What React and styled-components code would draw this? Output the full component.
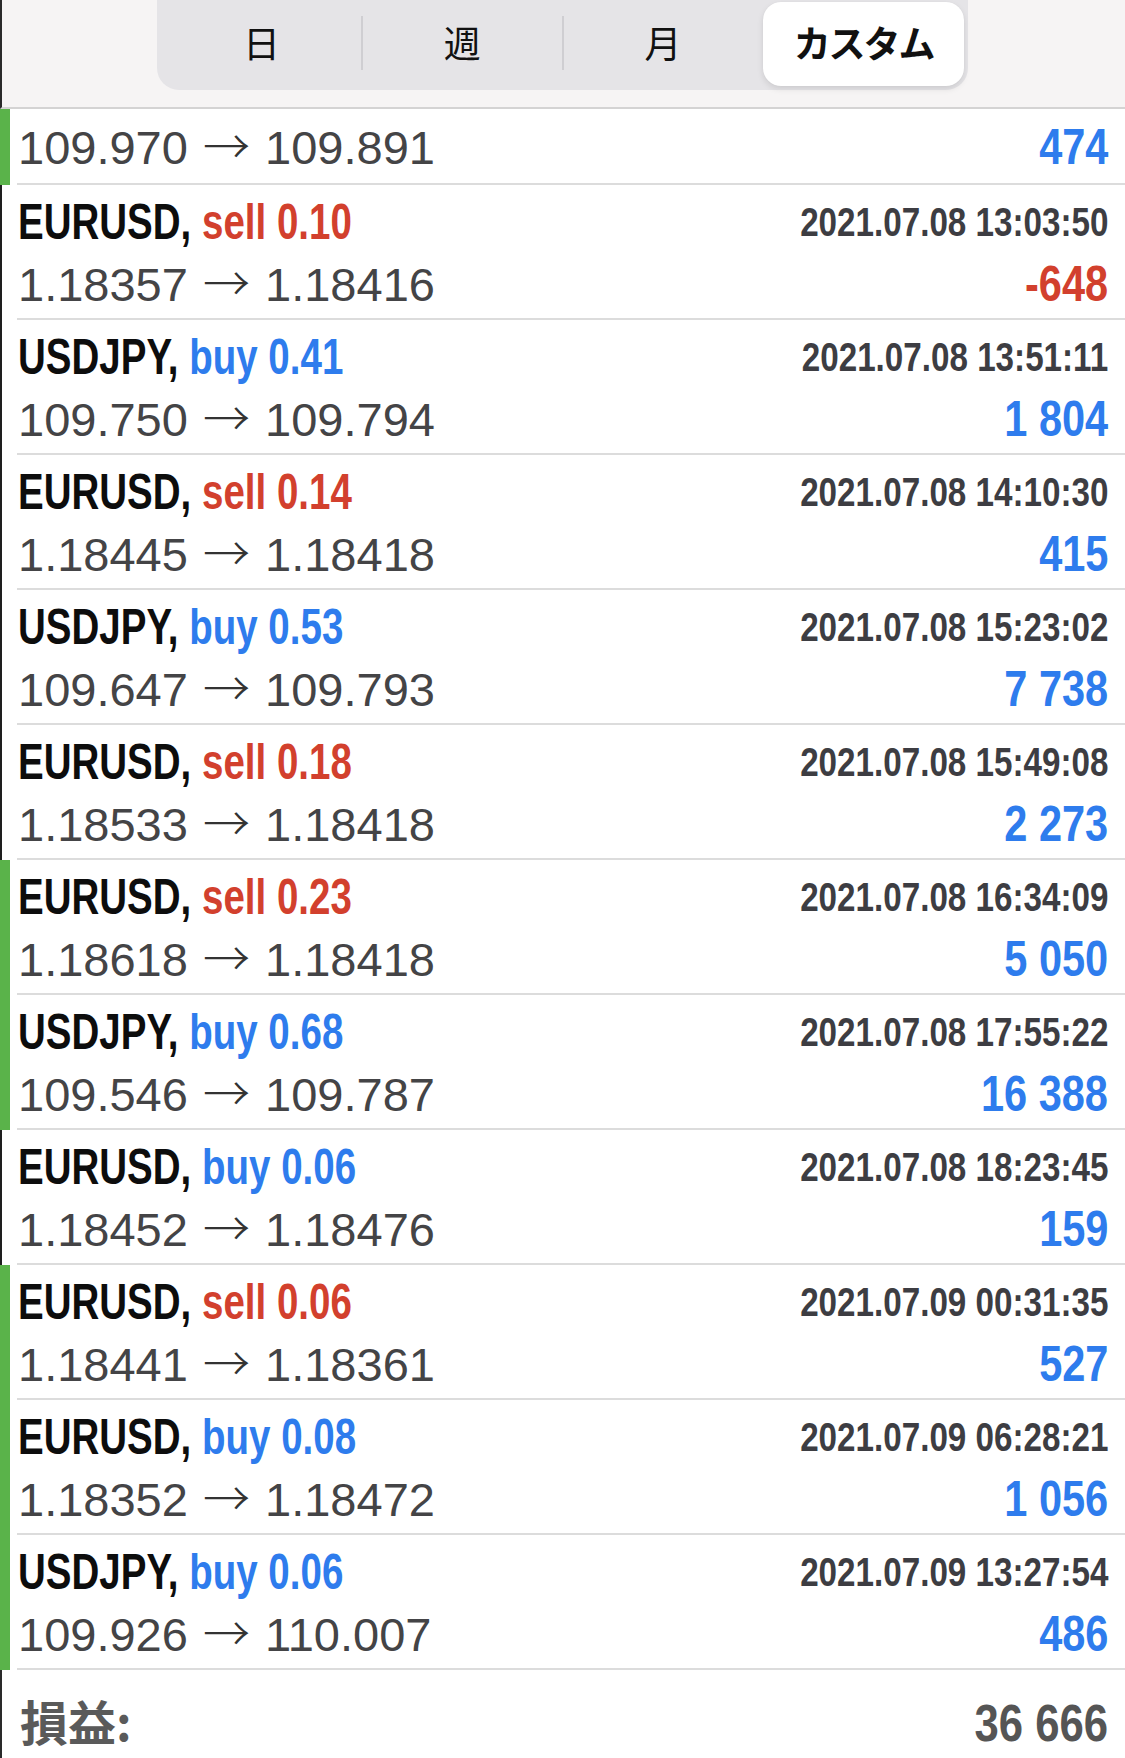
import React from "react";
import styled, { createGlobalStyle } from "styled-components";

const GlobalStyle = createGlobalStyle`
  body {
    margin: 0;
    background: #ffffff;
  }
`;

// no condensed face is installed, so the bold text is squeezed with scaleX
const BOLD = `"Liberation Sans", Arial, sans-serif`;
const CJK = `"Noto Sans CJK JP", "Noto Sans", sans-serif`;

const BLUE = "#2e7ced";
const RED = "#d2402d";
const GREEN = "#5ab34a";

let Page = styled.div`
  width: 1125px;
  min-height: 1758px;
  overflow: hidden;
  background: #ffffff;
`;

let Header = styled.header`
  height: 107px;
  background: #f6f4f4;
  border-bottom: 2px solid #d4d3d3;
  border-left: 2px solid #2a2a2a;
  display: flex;
  justify-content: center;
  align-items: flex-start;
`;

let Segmented = styled.div`
  box-sizing: border-box;
  width: 811px;
  height: 110px;
  margin-top: -20px;
  margin-left: -2px;
  padding: 22px 4px 4px;
  border-radius: 22px;
  background: #e5e4e7;
  display: grid;
  grid-template-columns: repeat(4, 1fr);
`;

let Segment = styled.div`
  position: relative;
  display: flex;
  justify-content: center;
  align-items: center;
  padding-bottom: 4px;
  font-family: ${CJK};
  font-size: 37px;
  font-weight: ${(p) => (p.$active ? 700 : 400)};
  letter-spacing: ${(p) => (p.$active ? "-2px" : "0")};
  color: #111111;
  border-radius: 18px;
  background: ${(p) => (p.$active ? "#ffffff" : "transparent")};
  box-shadow: ${(p) =>
    p.$active ? "0 3px 6px rgba(0,0,0,0.10), 0 0 1px rgba(0,0,0,0.08)" : "none"};

  &::before {
    content: "";
    display: ${(p) => (p.$divider ? "block" : "none")};
    position: absolute;
    left: -1px;
    top: 14px;
    height: 54px;
    width: 2px;
    background: #cfced2;
  }
`;

let Row = styled.div`
  display: flex;
  height: ${(p) => (p.$partial ? "76px" : "135px")};
`;

let Bar = styled.div`
  flex: 0 0 10px;
  background: ${(p) =>
    p.$win ? GREEN : "linear-gradient(to right, #1e1e1e 2px, transparent 2px)"};
`;

let Body = styled.div`
  flex: 1;
  margin-left: 7px;
  padding: ${(p) => (p.$partial ? "10px" : "7px")} 17px 0 1px;
  border-bottom: 2px solid #dcdcdc;
  display: flex;
  flex-direction: column;
  gap: 4px;
`;

let TopLine = styled.div`
  display: flex;
  justify-content: space-between;
  align-items: flex-start;
  height: 60px;
`;

let BottomLine = styled.div`
  display: flex;
  justify-content: space-between;
  align-items: baseline;
`;

let Squeezed = styled.span`
  display: inline-block;
  font-family: ${BOLD};
  font-weight: 700;
  white-space: nowrap;
  transform: scaleX(${(p) => p.$sx || 0.82});
  transform-origin: ${(p) => (p.$right ? "right" : "left")} center;
`;

let Symbol = styled(Squeezed)`
  font-size: 50px;
  line-height: 60px;
  color: #0d0d0d;
`;

let Side = styled.span`
  color: ${(p) => (p.$type === "buy" ? BLUE : RED)};
`;

let Time = styled(Squeezed)`
  font-size: 40px;
  line-height: 60px;
  color: #3d3d42;
`;

let Prices = styled.span`
  font-family: "Liberation Sans", Arial, sans-serif;
  font-size: 47px;
  line-height: 56px;
  color: #444446;
  white-space: nowrap;
`;

let Arrow = styled.span`
  font-family: ${CJK};
  font-weight: 300;
  line-height: 0;
  margin: 0 2px;
  color: #333333;
`;

let Profit = styled(Squeezed)`
  font-size: 50px;
  line-height: 56px;
  color: ${(p) => (p.$loss ? RED : BLUE)};
`;

let Footer = styled.footer`
  height: 68px;
  padding: 20px 17px 0 18px;
  border-left: 2px solid #2a2a2a;
  display: flex;
  justify-content: space-between;
  align-items: baseline;
`;

let TotalLabel = styled.span`
  font-family: ${CJK};
  font-weight: 700;
  font-size: 48px;
  line-height: 60px;
  color: #5a5a5a;
`;

let TotalValue = styled(Squeezed)`
  font-size: 52px;
  line-height: 60px;
  color: #555555;
`;

const tabs = ["日", "週", "月", "カスタム"];

const deals = [
  { sym: "EURUSD", type: "sell", lot: "0.10", time: "2021.07.08 13:03:50", open: "1.18357", close: "1.18416", profit: "-648", win: false },
  { sym: "USDJPY", type: "buy", lot: "0.41", time: "2021.07.08 13:51:11", open: "109.750", close: "109.794", profit: "1 804", win: false },
  { sym: "EURUSD", type: "sell", lot: "0.14", time: "2021.07.08 14:10:30", open: "1.18445", close: "1.18418", profit: "415", win: false },
  { sym: "USDJPY", type: "buy", lot: "0.53", time: "2021.07.08 15:23:02", open: "109.647", close: "109.793", profit: "7 738", win: false },
  { sym: "EURUSD", type: "sell", lot: "0.18", time: "2021.07.08 15:49:08", open: "1.18533", close: "1.18418", profit: "2 273", win: false },
  { sym: "EURUSD", type: "sell", lot: "0.23", time: "2021.07.08 16:34:09", open: "1.18618", close: "1.18418", profit: "5 050", win: true },
  { sym: "USDJPY", type: "buy", lot: "0.68", time: "2021.07.08 17:55:22", open: "109.546", close: "109.787", profit: "16 388", win: true },
  { sym: "EURUSD", type: "buy", lot: "0.06", time: "2021.07.08 18:23:45", open: "1.18452", close: "1.18476", profit: "159", win: false },
  { sym: "EURUSD", type: "sell", lot: "0.06", time: "2021.07.09 00:31:35", open: "1.18441", close: "1.18361", profit: "527", win: true },
  { sym: "EURUSD", type: "buy", lot: "0.08", time: "2021.07.09 06:28:21", open: "1.18352", close: "1.18472", profit: "1 056", win: true },
  { sym: "USDJPY", type: "buy", lot: "0.06", time: "2021.07.09 13:27:54", open: "109.926", close: "110.007", profit: "486", win: true },
];

const PriceLine = ({ open, close }) => (
  <Prices>
    {open} <Arrow>→</Arrow> {close}
  </Prices>
);

const Deal = ({ deal }) => {
  return (
    <Row>
      <Bar $win={deal.win} />
      <Body>
        <TopLine>
          <Symbol $sx={0.77}>
            {deal.sym},{" "}
            <Side $type={deal.type}>
              {deal.type} {deal.lot}
            </Side>
          </Symbol>
          <Time $right $sx={0.83}>
            {deal.time}
          </Time>
        </TopLine>
        <BottomLine>
          <PriceLine open={deal.open} close={deal.close} />
          <Profit $right $sx={0.83} $loss={deal.profit.startsWith("-")}>
            {deal.profit}
          </Profit>
        </BottomLine>
      </Body>
    </Row>
  );
};

const App = () => {
  return (
    <Page>
      <GlobalStyle />
      <Header>
        <Segmented>
          {tabs.map((t, i) => (
            <Segment key={t} $active={i === 3} $divider={i === 1 || i === 2}>
              {t}
            </Segment>
          ))}
        </Segmented>
      </Header>
      <Row $partial>
        <Bar $win />
        <Body $partial>
          <BottomLine>
            <PriceLine open="109.970" close="109.891" />
            <Profit $right $sx={0.83}>
              474
            </Profit>
          </BottomLine>
        </Body>
      </Row>
      {deals.map((d, i) => (
        <Deal deal={d} key={i} />
      ))}
      <Footer>
        <TotalLabel>損益:</TotalLabel>
        <TotalValue $right $sx={0.84}>
          36 666
        </TotalValue>
      </Footer>
    </Page>
  );
};

export default App;
